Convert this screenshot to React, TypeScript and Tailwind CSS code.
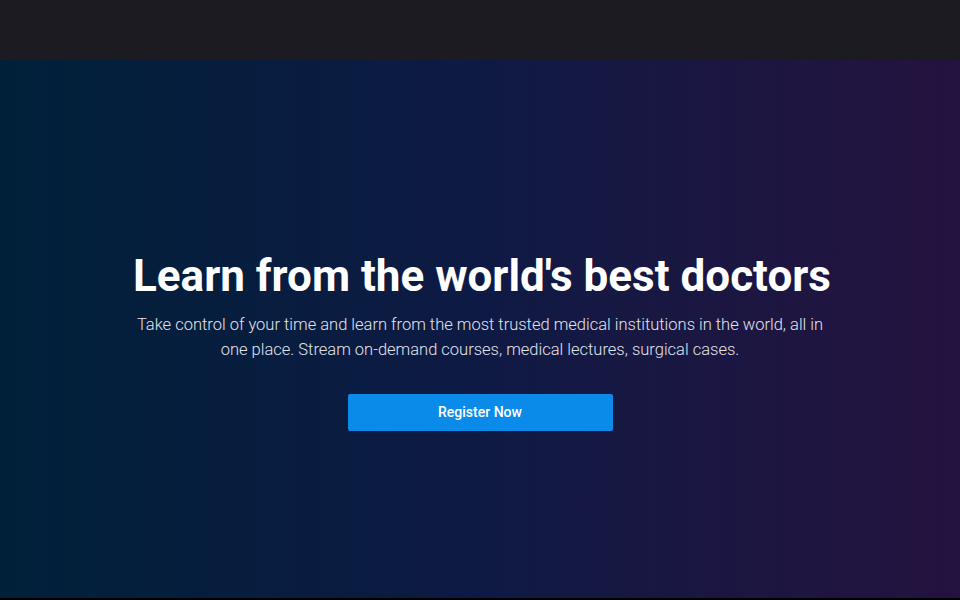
export default function App() {
  return (
    <div className="w-[960px] h-[600px] flex flex-col bg-black" style={{ fontFamily: "Roboto, 'Liberation Sans', sans-serif" }}>
      <header className="h-[60px] bg-[#1b1b21] shrink-0" />
      <section className="h-[538px] bg-gradient-to-r from-[#002039] via-[#0e1a44] to-[#24123f] flex flex-col items-center justify-center pt-[22px]">
        <h1 className="text-[44px] font-bold text-white leading-[52px] pl-[4px]">Learn from the world's best doctors</h1>
        <p className="mt-[10px] w-[716px] text-center text-[16.5px] font-light leading-[25px] text-[#e2e4ee]">
          Take control of your time and learn from the most trusted medical institutions in the world, all in one place. Stream on-demand courses, medical lectures, surgical cases.
        </p>
        <button className="mt-[32px] w-[265px] h-[37px] rounded-[2px] bg-[#0a8bea] text-white text-[14px] font-medium">Register Now</button>
      </section>
    </div>
  );
}
